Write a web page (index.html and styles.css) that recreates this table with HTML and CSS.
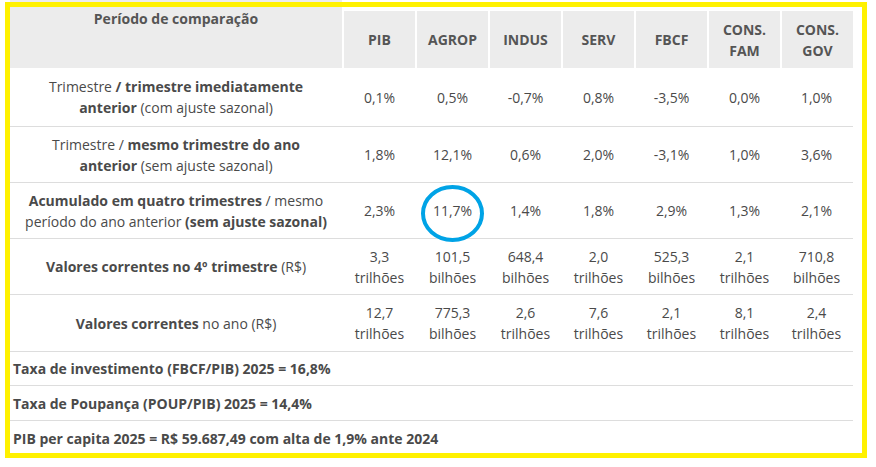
FILE: index.html
```html
<!DOCTYPE html>
<html lang="pt-BR">
<head>
<meta charset="utf-8">
<title>PIB</title>
<link rel="stylesheet" href="styles.css">
</head>
<body>
<div class="frame">
  <table class="pib">
    <colgroup>
      <col class="c-first">
      <col class="c-data"><col class="c-data"><col class="c-data"><col class="c-data"><col class="c-data"><col class="c-data"><col class="c-last">
    </colgroup>
    <thead>
      <tr class="h-spacer">
        <th class="h-first" rowspan="2">Período de comparação</th>
        <td colspan="7"></td>
      </tr>
      <tr class="h-labels">
        <th>PIB</th><th>AGROP</th><th>INDUS</th><th>SERV</th><th>FBCF</th><th>CONS.<br>FAM</th><th class="h-last">CONS.<br>GOV</th>
      </tr>
    </thead>
    <tbody>
      <tr class="r1">
        <td class="lbl">Trimestre <b>/ trimestre imediatamente<br>anterior</b> (com ajuste sazonal)</td>
        <td>0,1%</td><td>0,5%</td><td>-0,7%</td><td>0,8%</td><td>-3,5%</td><td>0,0%</td><td>1,0%</td>
      </tr>
      <tr class="r2">
        <td class="lbl">Trimestre / <b>mesmo trimestre do ano<br>anterior</b> (sem ajuste sazonal)</td>
        <td>1,8%</td><td>12,1%</td><td>0,6%</td><td>2,0%</td><td>-3,1%</td><td>1,0%</td><td>3,6%</td>
      </tr>
      <tr class="r3">
        <td class="lbl"><b>Acumulado em quatro trimestres</b> / mesmo<br>período do ano anterior <b>(sem ajuste sazonal)</b></td>
        <td>2,3%</td>
        <td class="marked">11,7%<svg class="ring" width="63" height="57" viewBox="0 0 63 57"><ellipse cx="31.5" cy="28.5" rx="29.5" ry="26.5" fill="none" stroke="#00a3e6" stroke-width="4"/></svg></td>
        <td>1,4%</td><td>1,8%</td><td>2,9%</td><td>1,3%</td><td>2,1%</td>
      </tr>
      <tr class="r4">
        <td class="lbl"><b>Valores correntes no 4º trimestre</b> (R$)</td>
        <td>3,3<br>trilhões</td><td>101,5<br>bilhões</td><td>648,4<br>bilhões</td><td>2,0<br>trilhões</td><td>525,3<br>bilhões</td><td>2,1<br>trilhões</td><td>710,8<br>bilhões</td>
      </tr>
      <tr class="r5">
        <td class="lbl"><b>Valores correntes</b> no ano (R$)</td>
        <td>12,7<br>trilhões</td><td>775,3<br>bilhões</td><td>2,6<br>trilhões</td><td>7,6<br>trilhões</td><td>2,1<br>trilhões</td><td>8,1<br>trilhões</td><td>2,4<br>trilhões</td>
      </tr>
      <tr class="r6"><td class="note" colspan="8">Taxa de investimento (FBCF/PIB) 2025 = 16,8%</td></tr>
      <tr class="r7"><td class="note" colspan="8">Taxa de Poupança (POUP/PIB) 2025 = 14,4%</td></tr>
      <tr class="r8"><td class="note" colspan="8">PIB per capita 2025 = R$ 59.687,49 com alta de 1,9% ante 2024</td></tr>
    </tbody>
  </table>
  <div class="highlight"></div>
</div>
</body>
</html>
```

FILE: styles.css
```css
html, body {
  margin: 0;
  padding: 0;
  background: #ffffff;
}

body {
  font-family: "Open Sans", "Liberation Sans", sans-serif;
  color: #4a4a4a;
  width: 876px;
  height: 467px;
  overflow: hidden;
}

.frame {
  position: relative;
  padding-left: 10px;
  height: 467px;
}

.pib {
  border-collapse: separate;
  border-spacing: 0;
  table-layout: fixed;
  width: 843px;
}

.c-first { width: 334px; }
.c-data { width: 73px; }
.c-last { width: 71px; }

.pib th {
  background: #ececec;
  color: #555555;
  font-weight: 700;
  font-size: 14px;
  line-height: 21px;
  text-align: center;
  vertical-align: middle;
  border-right: 2px solid #ffffff;
  padding: 0;
}

.pib th.h-last { border-right: 0; }

.pib th.h-first {
  vertical-align: top;
  padding-top: 8px;
}

.h-spacer { height: 11px; }
.h-spacer td { padding: 0; }
.h-labels { height: 57px; }

.pib tbody td {
  font-size: 14px;
  line-height: 21px;
  text-align: center;
  vertical-align: middle;
  padding: 0 2px 0 0;
  border-bottom: 1px solid #dddddd;
}

.pib tbody td.lbl {
  padding: 0 2px 0 0;
  white-space: nowrap;
}

.pib b { font-weight: 700; }

.pib tbody td.note {
  text-align: left;
  font-weight: 700;
  font-size: 14px;
  padding-left: 3px;
}

.r1 { height: 59px; }
.r2 { height: 56px; }
.r3 { height: 56px; }
.r4 { height: 56px; }
.r5 { height: 57px; }
.r6 { height: 34px; }
.r7 { height: 35px; }
.r8 { height: 35px; }

.marked { position: relative; }

.ring {
  position: absolute;
  left: 4px;
  top: 2px;
}

.highlight {
  position: absolute;
  left: 5px;
  top: 2px;
  width: 862px;
  height: 456px;
  box-sizing: border-box;
  border: 5px solid #fff100;
  pointer-events: none;
}
```
